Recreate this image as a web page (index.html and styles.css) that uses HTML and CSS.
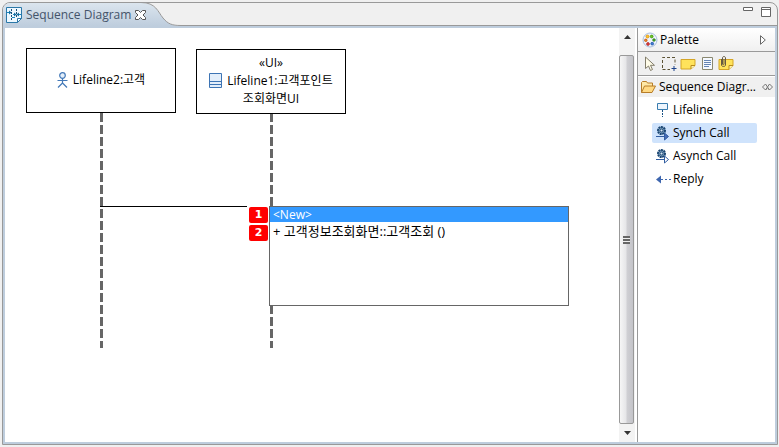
FILE: index.html
```html
<!DOCTYPE html>
<html lang="ko">
<head>
<meta charset="utf-8">
<title>Sequence Diagram</title>
<link rel="stylesheet" href="styles.css">
</head>
<body>
<main class="editor">
  <header class="tabbar">
    <div class="tab">
      <svg class="tab-icon" width="16" height="16" viewBox="0 0 16 16" aria-hidden="true">
        <path d="M.5.5h15v11l-4 4H.5z" fill="#eef8ff" stroke="#2b78a8"/>
        <path d="M11.5 15.500v-4h4z" fill="#fff" stroke="#2b78a8"/>
        <path d="M5.500 2v12M10.500 2v9" stroke="#174f78" stroke-dasharray="2 1"/>
        <path d="M1 5.500h3M7 7.500h2M12 7.500h3M6 10.500h3" stroke="#1687c1"/>
        <path d="M3 3.500l2.500 2-2.500 2zM8 5.500l2.500 2-2.500 2zM13 5.500l-2.500 2 2.500 2z" fill="#126c9f"/>
      </svg>
      <span>Sequence Diagram</span>
      <button class="close" type="button" aria-label="Close">
        <svg width="11" height="10" viewBox="0 0 11 10"><path d="M.5.5h3l2 2 2-2h3v2L8 5l2.500 2.500v2h-3l-2-2-2 2h-3v-2L3 5 .5 2.500z" fill="#fff" stroke="#555"/></svg>
      </button>
    </div>
    <svg class="tab-curve" width="40" height="23" viewBox="0 0 40 23" aria-hidden="true">
      <defs><linearGradient id="tabfill" x2="0" y2="1"><stop stop-color="#dbe5ee"/><stop offset="1" stop-color="#becddd"/></linearGradient></defs>
      <path d="M0 0C15 0 17 9 22 15S31 22.500 40 23H0z" fill="url(#tabfill)"/>
      <path d="M0-.5C15-.5 17 9 22 15S31 22.500 40 22.500" fill="none" stroke="#999"/>
    </svg>
    <div class="tab-rest">
      <button type="button" aria-label="Minimize"><svg width="10" height="10" viewBox="0 0 10 10"><path d="M.5.5h9v3h-9z" fill="#fff" stroke="#666"/></svg></button>
      <button type="button" aria-label="Maximize"><svg width="10" height="10" viewBox="0 0 10 10"><path d="M.5.5h9v9h-9zM0 2.500h10" fill="#fff" stroke="#666"/></svg></button>
    </div>
  </header>
  <div class="content">
    <section class="canvas" aria-label="Diagram">
      <div class="stem stem-a"></div>
      <div class="stem stem-b"></div>
      <div class="node node-a">
        <div class="node-line">
          <svg width="11" height="16" viewBox="0 0 11 16" aria-hidden="true"><g fill="none" stroke="#4479b8" stroke-width="1.200"><circle cx="5.500" cy="3.500" r="2.800" fill="#e4effa"/><path d="M5.500 6.500v5M.5 8.500h10M5.500 11L1 15.500M5.500 11l4.500 4.500"/></g></svg>
          <span>Lifeline2:고객</span>
        </div>
      </div>
      <div class="node node-b">
        <div>«UI»</div>
        <div class="node-line">
          <svg width="13" height="15" viewBox="0 0 13 15" aria-hidden="true"><path d="M.5.5h12v14H.5z" fill="#e3eefa" stroke="#3d74b4"/><path d="M0 8.500h13M0 11.500h13" stroke="#3d74b4"/></svg>
          <span>Lifeline1:고객포인트</span>
        </div>
        <div>조회화면UI</div>
      </div>
      <div class="message"></div>
      <ul class="popup">
        <li><button class="option chosen" type="button">&lt;New&gt;</button></li>
        <li><button class="option operation" type="button">+ 고객정보조회화면::고객조회 ()</button></li>
      </ul>
      <span class="badge badge-one">1</span>
      <span class="badge badge-two">2</span>
    </section>
    <div class="scroll" aria-hidden="true">
      <svg class="arrow" width="7" height="4" viewBox="0 0 7 4"><path d="M0 4L3.500 0 7 4z" fill="#333"/></svg>
      <div class="thumb"><span class="grip"></span></div>
      <svg class="arrow" width="7" height="4" viewBox="0 0 7 4"><path d="M0 0h7L3.500 4z" fill="#333"/></svg>
    </div>
    <aside class="palette">
      <div class="palette-title">
        <svg width="16" height="16" viewBox="0 0 16 16" aria-hidden="true"><circle cx="8" cy="8" r="7" fill="#eff4fc" stroke="#a9bfdf"/><g stroke-width=".7"><circle cx="5.500" cy="4.500" r="1.500" fill="#ffc52d" stroke="#d58a00"/><circle cx="9.700" cy="4.500" r="1.400" fill="#6ecb28" stroke="#378b00"/><circle cx="3.800" cy="8.300" r="1.300" fill="#ef852d" stroke="#be5200"/><circle cx="12" cy="8" r="1.300" fill="#48b42b" stroke="#28761a"/><circle cx="6" cy="12" r="1.400" fill="#e54343" stroke="#a51d1d"/><circle cx="10.200" cy="11.700" r="1.400" fill="#3f7dd5" stroke="#1e4fa2"/></g></svg>
        <span>Palette</span>
        <button class="push" type="button" aria-label="Collapse palette"><svg width="6" height="10" viewBox="0 0 6 10"><path d="M.5.7v8.600L5.300 5z" fill="#fff" stroke="#666"/></svg></button>
      </div>
      <div class="tools">
        <button type="button" aria-label="Select"><svg width="16" height="16" viewBox="0 0 16 16"><path d="M3.500 1v11.500l3-2.500 2 4.500 2-1-2-4.200h4z" fill="#fffce8" stroke="#827d6b"/></svg></button>
        <button type="button" aria-label="Marquee"><svg width="16" height="16" viewBox="0 0 16 16"><path d="M1.500 12V1.500H14V9M1.500 13.500H9" fill="none" stroke="#5c5335" stroke-dasharray="3 2"/><path d="M13 10v5M10.500 12.500h5" stroke="#1d438b"/></svg></button>
        <button type="button" aria-label="Note"><svg width="16" height="16" viewBox="0 0 16 16"><path d="M1 3.500h14v6l-4 3.500H1z" fill="#ffe35b" stroke="#d4a527"/><path d="M11 13V9.500h4" fill="#fff3aa" stroke="#b98b1c"/></svg></button>
        <button type="button" aria-label="Text"><svg width="16" height="16" viewBox="0 0 16 16"><path d="M3.500 1.500h10v12h-10z" fill="#f5f9ff" stroke="#8a8870"/><path d="M5 4.500h7M5 6.500h7M5 8.500h7M5 10.500h5" stroke="#6685b4"/></svg></button>
        <button type="button" aria-label="Note attachment"><svg width="16" height="16" viewBox="0 0 16 16"><path d="M1 3.500h14v6l-4 4H1z" fill="#ffe35b" stroke="#d4a527"/><path d="M11 13.500v-4h4" fill="#fff3aa" stroke="#b98b1c"/><path d="M3.500 3v6c0 2 4 2 4 0V2c0-2-3-2-3 0v6c0 1 1.500 1 1.500 0V3" fill="none" stroke="#655a42"/></svg></button>
      </div>
      <button class="drawer" type="button">
        <svg width="16" height="16" viewBox="0 0 16 16" aria-hidden="true"><path d="M1.500 13.500v-10l1-1h4l1 1.500h5v3" fill="#ffe9a7" stroke="#b77d28"/><path d="M1.500 13.500l3-6.500h11l-3.500 6.500z" fill="#ffd983" stroke="#b77d28"/></svg>
        <span class="drawer-name">Sequence Diagr...</span>
        <svg width="11" height="8" viewBox="0 0 11 8" aria-hidden="true"><path d="M3.500 1L.5 4l3 3 1.500-1.500M7.500 1l3 3-3 3L6 5.500M3.500 1l4 6M7.500 1l-4 6" fill="none" stroke="#777"/></svg>
      </button>
      <nav class="entries">
        <button class="entry" type="button">
          <svg width="16" height="16" viewBox="0 0 16 16" aria-hidden="true"><path d="M1.500 1.500h10v6h-10z" fill="#edf5fd" stroke="#397caf"/><path d="M6.500 8v7" stroke="#174f83" stroke-dasharray="2 1"/></svg>
          <span>Lifeline</span>
        </button>
        <button class="entry current" type="button">
          <svg width="16" height="16" viewBox="0 0 16 16" aria-hidden="true"><circle cx="5.500" cy="5.500" r="3.500" fill="#7fa3c3" stroke="#1b4672" stroke-width="2" stroke-dasharray="2 .6"/><circle cx="5.500" cy="5.500" r="1.500" fill="#dbe9f5" stroke="#1b4672"/><path d="M0 11.500h9" stroke="#315da1"/><path d="M8.500 8v7l4-3.500z" fill="#476cb5" stroke="#315da1"/></svg>
          <span>Synch Call</span>
        </button>
        <button class="entry" type="button">
          <svg width="16" height="16" viewBox="0 0 16 16" aria-hidden="true"><circle cx="5.500" cy="5.500" r="3.500" fill="#7fa3c3" stroke="#1b4672" stroke-width="2" stroke-dasharray="2 .6"/><circle cx="5.500" cy="5.500" r="1.500" fill="#dbe9f5" stroke="#1b4672"/><path d="M0 11.500h9" stroke="#315da1"/><path d="M8.500 8v7l4-3.500z" fill="#fff" stroke="#315da1"/></svg>
          <span>Asynch Call</span>
        </button>
        <button class="entry" type="button">
          <svg width="16" height="16" viewBox="0 0 16 16" aria-hidden="true"><path d="M0 8.500l5-4v8z" fill="#3e66ae"/><path d="M5 8.500h2M9 8.500h2M13 8.500h2" stroke="#3e66ae"/></svg>
          <span>Reply</span>
        </button>
      </nav>
    </aside>
  </div>
</main>
</body>
</html>
```
FILE: styles.css
```css
* { box-sizing: border-box; }
body {
  margin: 0;
  height: 100vh;
  padding: 2px 1px 2px 2px;
  background: #f0f0f0;
  color: #000;
  font: 12px/18px "Open Sans", "Noto Sans CJK KR", sans-serif;
}
button {
  display: flex;
  align-items: center;
  padding: 0;
  border: 0;
  background: none;
  color: inherit;
  font: inherit;
  text-align: left;
}
svg { display: block; flex: none; }
.editor {
  display: flex;
  flex-direction: column;
  height: 100%;
  border: 1px solid #999;
  border-radius: 8px 8px 0 0;
  overflow: hidden;
}
.tabbar { display: flex; height: 23px; flex: none; }
.tab {
  display: flex;
  align-items: center;
  gap: 4px;
  padding-left: 3px;
  background: linear-gradient(#dbe5ee, #becddd);
  color: #44546a;
}
.close { z-index: 1; margin-right: -4px; }
.tab-curve { margin-left: -1px; }
.tab-rest {
  display: flex;
  flex: 1;
  justify-content: flex-end;
  align-items: flex-start;
  gap: 8px;
  margin-left: -1px;
  padding: 4px 6px 0 0;
  border-bottom: 1px solid #999;
}
.content {
  display: flex;
  flex: 1;
  min-height: 0;
  border: 2px solid #becddd;
  background: #fff;
}
.canvas { position: relative; flex: 1; overflow: hidden; }
.node {
  position: absolute;
  display: flex;
  flex-direction: column;
  align-items: center;
  justify-content: center;
  width: 150px;
  height: 65px;
  padding-bottom: 2px;
  border: 1px solid #000;
  background: #fff;
}
.node-line { display: flex; align-items: center; gap: 5px; }
.node-a { left: 21px; top: 20px; }
.node-b { left: 191px; top: 21px; }
.stem {
  position: absolute;
  top: 85px;
  width: 3px;
  height: 235px;
  background: repeating-linear-gradient(#666 0 9px, transparent 9px 12px);
}
.stem-a { left: 95px; }
.stem-b { left: 265px; }
.message {
  position: absolute;
  left: 95px;
  top: 178px;
  width: 147px;
  height: 1px;
  background: #000;
}
.popup {
  position: absolute;
  left: 264px;
  top: 178px;
  width: 300px;
  height: 100px;
  margin: 0;
  padding: 0;
  border: 1px solid #666;
  background: #fff;
  list-style: none;
}
.option { width: 100%; height: 15px; padding-left: 3px; }
.chosen { background: #39f; color: #fff; }
.operation { height: 17px; font-size: 13px; }
.badge {
  position: absolute;
  left: 244px;
  width: 19px;
  height: 16px;
  border-radius: 2px;
  background: #f00;
  color: #fff;
  font: bold 11px/16px "DejaVu Sans", sans-serif;
  text-align: center;
}
.badge-one { top: 179px; }
.badge-two { top: 197px; }
.scroll {
  display: flex;
  flex-direction: column;
  align-items: center;
  width: 16px;
  background: #f3f3f3;
}
.arrow { margin: 7px 0; }
.thumb {
  display: flex;
  flex: 1;
  align-items: center;
  justify-content: center;
  align-self: stretch;
  margin: 9px 1px 0 0;
  border: 1px solid #999;
  border-radius: 2px;
  background: linear-gradient(90deg, #f6f6f6, #e6e6e8 45%, #cfcfd3 55%, #c4c4c9);
}
.grip {
  width: 7px;
  height: 8px;
  background: repeating-linear-gradient(#666 0 2px, #eee 2px 3px);
}
.palette { width: 138px; margin-left: 2px; border-left: 1px solid #999; }
.palette-title, .tools { display: flex; align-items: center; height: 24px; border-bottom: 1px solid #999; }
.palette-title {
  gap: 2px;
  padding: 0 9px 0 4px;
  background: linear-gradient(#fff, #f0f0f0);
}
.push { margin-left: auto; }
.tools { gap: 3px; padding-left: 4px; background: #f0f0f0; }
.drawer {
  width: 100%;
  height: 20px;
  margin-top: 1px;
  padding: 0 2px;
  gap: 3px;
  background: #f0f0f0;
}
.drawer-name { flex: 1; white-space: nowrap; }
.entries { display: flex; flex-direction: column; gap: 3px; padding: 3px 18px 0 14px; }
.entry { height: 20px; gap: 1px; padding-left: 4px; border-radius: 2px; }
.current { background: #cfe3fc; }
```
